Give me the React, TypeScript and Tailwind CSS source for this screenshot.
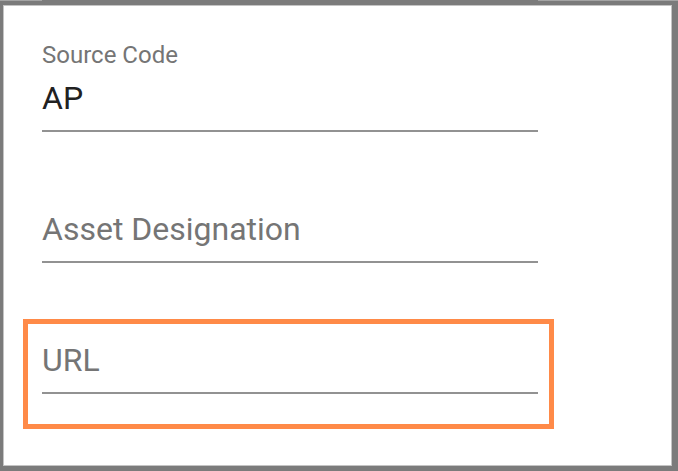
import React from 'react';

interface FieldProps {
	label: string;
	value?: string;
}

function Field({ label, value }: FieldProps) {
	const filled = !!value;
	return (
		<div className="w-[496px]">
			{/* shrunk label, only when there is a value */}
			<div className="h-[24px] text-[24px] leading-none text-[#757575]">{filled ? label : ''}</div>
			<div className={`mt-[13px] h-[36px] text-[32px] leading-[36px] ${filled ? 'text-[#212121]' : 'text-[#757575]'}`}>
				{filled ? value : label}
			</div>
			<div className="mt-[14px] h-[2px] bg-[#929292]" />
		</div>
	);
}

export default function App() {
	return (
		<div className="w-[678px] h-[471px] flex flex-col bg-[#7b7b7b]" style={{ fontFamily: 'Roboto, "Noto Sans", sans-serif' }}>
			<div className="h-px flex shrink-0">
				<div className="w-[42px] bg-[#a4a4a4]" />
				<div className="w-[496px] bg-[#7b7b7b]" />
				<div className="flex-1 bg-[#a4a4a4]" />
			</div>
			<div className="flex-1 pt-[4px] pl-[3px] pr-[6px] pb-[5px] flex">
				<div className="relative flex-1 bg-white border border-[#c4c4c4] pt-[37px] pl-[38px] flex flex-col gap-[42px]">
					<Field label="Source Code" value="AP" />
					<Field label="Asset Designation" />
					<Field label="URL" />
					{/* highlight around the URL field */}
					<div className="absolute left-[19px] top-[313px] w-[531px] h-[110px] border-[5px] border-[#ff8a48]" />
				</div>
			</div>
		</div>
	);
}
